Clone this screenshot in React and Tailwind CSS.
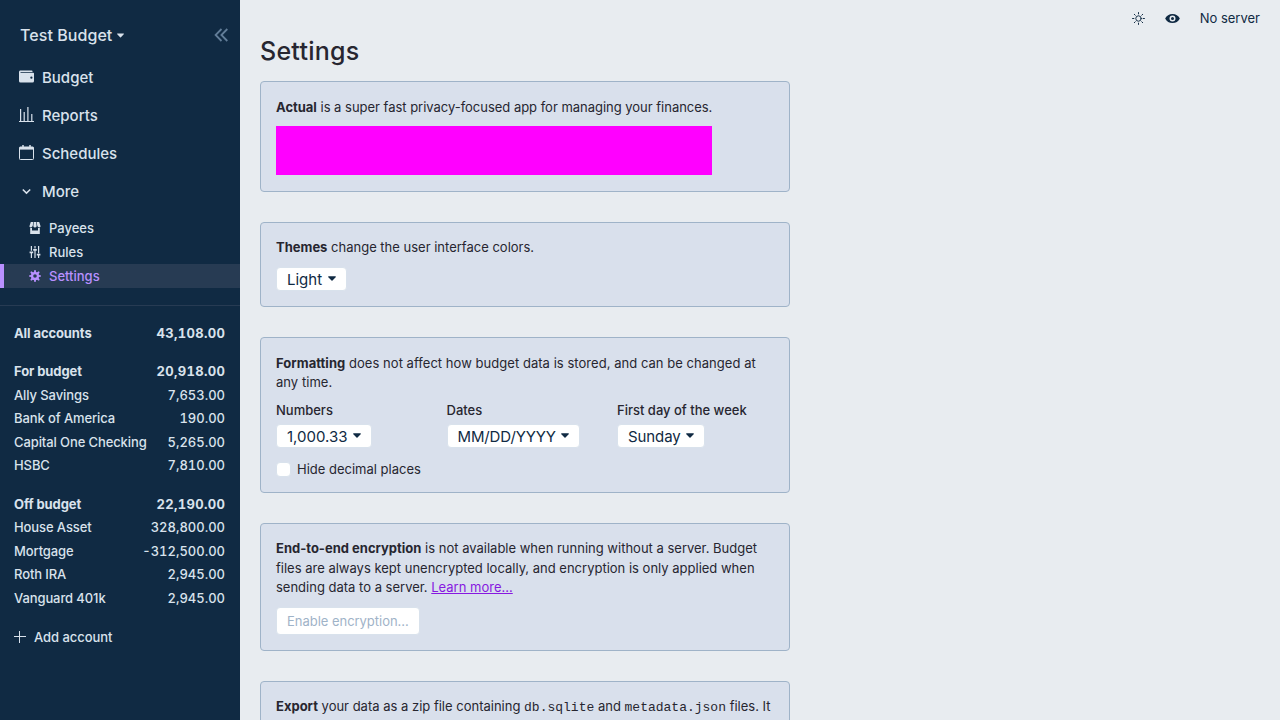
const P = ({ d, className = '', box = '0 0 20 20' }) => (
  <svg viewBox={box} fill="currentColor" className={`shrink-0 ${className}`}>
    <path d={d} />
  </svg>
);

const icons = {
  wallet: 'M0 4c0-1.1.9-2 2-2h15a1 1 0 0 1 1 1v1H2v1h17a1 1 0 0 1 1 1v10a2 2 0 0 1-2 2H2a2 2 0 0 1-2-2V4zm16.5 9a1.5 1.5 0 1 0 0-3 1.5 1.5 0 0 0 0 3z',
  chevron: 'M9.293 12.95l.707.707L15.657 8l-1.414-1.414L10 10.828 5.757 6.586 4.343 8z',
  store: 'M18 9.87V20H2V9.87a4.25 4.25 0 0 0 3-.38V14h10V9.5a4.26 4.26 0 0 0 3 .37zM3 0h4l-.67 6.03A3.43 3.43 0 0 1 3 9C1.34 9 .42 7.73.95 6.15L3 0zm5 0h4l.7 6.3c.17 1.5-.91 2.7-2.42 2.7h-.56A2.38 2.38 0 0 1 7.3 6.3L8 0zm5 0h4l2.05 6.15C19.58 7.73 18.65 9 17 9a3.42 3.42 0 0 1-3.33-2.97L13 0z',
  tuning: 'M17 16v4h-2v-4h-2v-3h6v3h-2zM1 9h6v3H1V9zm6-4h6v3H7V5zM3 0h2v8H3V0zm12 0h2v12h-2V0zM9 0h2v4H9V0zM3 12h2v8H3v-8zm6-4h2v12H9V8z',
  cog: 'M3.94 6.5L2.22 3.64l1.42-1.42L6.5 3.94c.52-.3 1.1-.54 1.7-.7L9 0h2l.8 3.24c.6.16 1.18.4 1.7.7l2.86-1.72 1.42 1.42-1.72 2.86c.3.52.54 1.1.7 1.7L20 9v2l-3.24.8c-.16.6-.4 1.18-.7 1.7l1.72 2.86-1.42 1.42-2.86-1.72c-.52.3-1.1.54-1.7.7L11 20H9l-.8-3.24c-.6-.16-1.18-.4-1.7-.7l-2.86 1.72-1.42-1.42 1.72-2.86c-.3-.52-.54-1.1-.7-1.7L0 11V9l3.24-.8c.16-.6.4-1.18.7-1.7zM10 13a3 3 0 1 0 0-6 3 3 0 0 0 0 6z',
  eye: 'M.2 10a11 11 0 0 1 19.6 0A11 11 0 0 1 .2 10zm9.8 4a4 4 0 1 0 0-8 4 4 0 0 0 0 8zm0-2a2 2 0 1 1 0-4 2 2 0 0 1 0 4z',
};

const Reports = () => (
  <svg viewBox="0 0 15 15" fill="currentColor" className="mb-px size-[15px] shrink-0">
    <path d="M0 14h15v1H0zM1 2h1.2v12H1zM4.6 5h1.2v9H4.6zM8.3 0h1.2v14H8.3zM12.2 7h1.2v7h-1.2z" />
  </svg>
);

const Calendar = () => (
  <svg viewBox="0 0 15 15" fill="none" stroke="currentColor" className="mb-px size-[15px] shrink-0">
    <path d="M1.2 2h12.6a.7.7 0 0 1 .7.7v11a.8.8 0 0 1-.8.8H1.3a.8.8 0 0 1-.8-.8v-11a.7.7 0 0 1 .7-.7z" />
    <path d="M.5 2h14v2.6H.5z" fill="currentColor" stroke="none" />
    <path d="M4 0v3M11 0v3" strokeWidth="1.5" />
  </svg>
);

const Sun = () => (
  <svg viewBox="0 0 24 24" fill="none" stroke="currentColor" strokeWidth="1.8" strokeLinecap="round" className="size-[13px]">
    <circle cx="12" cy="12" r="5" />
    <path d="M12 1v2.5M12 20.5V23M1 12h2.5M20.5 12H23M4.2 4.2L6 6M18 18l1.8 1.8M4.2 19.8L6 18M18 6l1.8-1.8" />
  </svg>
);

const Caret = ({ className = '' }) => (
  <svg viewBox="0 0 8 5" fill="currentColor" className={`shrink-0 ${className}`}>
    <path d="M.7.3h6.6c.6 0 .8.5.4.9L4.5 4.6a.7.7 0 0 1-1 0L.3 1.2C-.1.8.1.3.7.3z" />
  </svg>
);

const NavItem = ({ icon, children }) => (
  <div className="flex h-[38px] items-center gap-2 pl-[19px] text-[15px] font-medium">
    {icon}
    <span className="pt-0.5">{children}</span>
  </div>
);

const SubItem = ({ icon, active, children }) => (
  <div className={`flex h-6 items-center gap-2 border-l-4 pl-[25px] font-medium ${active ? 'border-[#b990ff] bg-[#273b53] text-[#b990ff]' : 'border-transparent'}`}>
    <P d={icons[icon]} className="size-3" />
    <span className="pt-px">{children}</span>
  </div>
);

const Account = ({ name, amount, bold, className = '' }) => (
  <div className={`flex h-[23.5px] items-center justify-between pt-px pl-3.5 pr-[15px] ${bold ? 'font-bold' : ''} ${className}`}>
    <span className="tracking-[-0.1px]">{name}</span>
    <span className={`tabular-nums ${bold ? '-mr-[0.3px] tracking-[0.32px]' : ''}`}>{amount}</span>
  </div>
);

const Panel = ({ children, className = '' }) => (
  <section className={`w-[530px] shrink-0 rounded-[4px] border border-[#9fb3c8] bg-[#d9e0ec] p-[15px] ${className}`}>{children}</section>
);

const Text = ({ children, className = '' }) => (
  <p className={`-mb-[0.6px] pt-[0.6px] ${className}`}>{children}</p>
);

const Select = ({ children, className = '' }) => (
  <button className={`flex h-6 w-fit items-center rounded-[4px] border border-[#d9e2ec] bg-white px-2.5 text-[15px] leading-5 text-[#102a43] ${className}`}>
    <span className="pt-0.5">{children}</span>
    <Caret className="mb-0.5 ml-[5.5px] h-[5px] w-2" />
  </button>
);

const Field = ({ label, value, className = '' }) => (
  <div className="w-[170.5px] shrink-0">
    <div className="h-[23px] font-medium whitespace-nowrap">{label}</div>
    <Select className={className}>{value}</Select>
  </div>
);

const forBudget = [
  ['Ally Savings', '7,653.00'],
  ['Bank of America', '190.00'],
  ['Capital One Checking', '5,265.00'],
  ['HSBC', '7,810.00'],
];
const offBudget = [
  ['House Asset', '328,800.00'],
  ['Mortgage', '-312,500.00'],
  ['Roth IRA', '2,945.00'],
  ['Vanguard 401k', '2,945.00'],
];

export default function App() {
  return (
    <div className="flex h-screen w-screen overflow-hidden bg-[#e8ecf0] font-['Inter',sans-serif] text-[13px] leading-[19.5px] text-[#272630]">
      <aside className="flex w-60 shrink-0 flex-col bg-[#102a43] text-[#d9e2ec]">
        <div className="flex h-[58px] items-center pt-3 pr-[12.5px] pl-5">
          <span className="text-base font-medium tracking-[0.06px]">Test Budget</span>
          <Caret className="ml-[5px] h-[5px] w-[7px]" />
          <svg viewBox="0 0 14 14" fill="none" stroke="#627d98" strokeWidth="1.8" className="ml-auto size-3.5">
            <path d="M7.5 1L1.6 7l5.9 6M13.3 1L7.4 7l5.9 6" />
          </svg>
        </div>
        <nav>
          <NavItem icon={<P d={icons.wallet} className="mb-px size-[15px]" />}>Budget</NavItem>
          <NavItem icon={<Reports />}>Reports</NavItem>
          <NavItem icon={<Calendar />}>Schedules</NavItem>
          <NavItem icon={<P d={icons.chevron} className="size-[15px]" />}>More</NavItem>
          <div className="pt-1.5">
            <SubItem icon="store">Payees</SubItem>
            <SubItem icon="tuning">Rules</SubItem>
            <SubItem icon="cog" active>Settings</SubItem>
          </div>
        </nav>
        <div className="mt-[17px] border-t border-[#273b53] pt-[15.5px] font-medium">
          <Account name="All accounts" amount="43,108.00" bold />
          <Account name="For budget" amount="20,918.00" bold className="mt-[14.5px]" />
          {forBudget.map(([n, a]) => <Account key={n} name={n} amount={a} />)}
          <Account name="Off budget" amount="22,190.00" bold className="mt-[15px]" />
          {offBudget.map(([n, a]) => <Account key={n} name={n} amount={a} />)}
          <div className="mt-4 flex h-[23px] items-center gap-2 pl-3.5">
            <svg viewBox="0 0 12 12" stroke="currentColor" className="size-3">
              <path d="M5.5 0v12M0 5.5h12" />
            </svg>
            <span className="pt-px tracking-[-0.05px]">Add account</span>
          </div>
        </div>
      </aside>

      <main className="flex min-w-0 flex-1 flex-col">
        <div className="flex h-9 shrink-0 items-center justify-end pr-5 text-[#102a43]">
          <Sun />
          <P d={icons.eye} className="ml-5 size-[15px]" />
          <span className="ml-5 pt-px">No server</span>
        </div>
        <div className="flex flex-col px-5">
          <h1 className="mb-[10px] h-[35px] text-[25px] leading-[30px] font-medium tracking-[0.25px]">Settings</h1>
          <div className="flex flex-col gap-[30px]">
            <Panel className="h-[110.5px]">
              <Text className="tracking-[-0.02px]"><strong>Actual</strong> is a super fast privacy-focused app for managing your finances.</Text>
              <div className="mt-[9.9px] h-[49px] w-[436px] bg-[#ff00ff]" />
            </Panel>
            <Panel className="h-[85.5px]">
              <Text><strong>Themes</strong> change the user interface colors.</Text>
              <Select className="mt-2.5">Light</Select>
            </Panel>
            <Panel className="h-[155.5px]">
              <Text className="tracking-[0.04px]"><strong>Formatting</strong> does not affect how budget data is stored, and can be changed at any time.</Text>
              <div className="mt-[9px] flex">
                <Field label="Numbers" value="1,000.33" />
                <Field label="Dates" value="MM/DD/YYYY" className="tracking-[-0.13px]" />
                <Field label="First day of the week" value="Sunday" className="tracking-[-0.1px]" />
              </div>
              <div className="mt-[11px] flex items-center gap-1.5">
                <span className="size-[15px] rounded-[4px] border border-[#d9e2ec] bg-white" />
                <span className="pt-px">Hide decimal places</span>
              </div>
            </Panel>
            <Panel className="h-[128px]">
              <Text>
                <strong>End-to-end encryption</strong> is not available when running without a server. Budget files are always kept unencrypted locally, and encryption is only applied when sending data to a server.{' '}
                <a className="text-[#8719e0] underline">Learn more…</a>
              </Text>
              <button className="mt-2.5 flex h-[27.5px] items-center rounded-[4px] border border-[#d9e2ec] bg-white px-2.5 pt-px tracking-[-0.03px] text-[#9fb3c8]">Enable encryption…</button>
            </Panel>
            <Panel>
              <Text>
                <strong>Export</strong> your data as a zip file containing <code className="font-['Liberation_Mono',monospace]">db.sqlite</code> and <code className="font-['Liberation_Mono',monospace]">metadata.json</code> files. It
              </Text>
            </Panel>
          </div>
        </div>
      </main>
    </div>
  );
}
